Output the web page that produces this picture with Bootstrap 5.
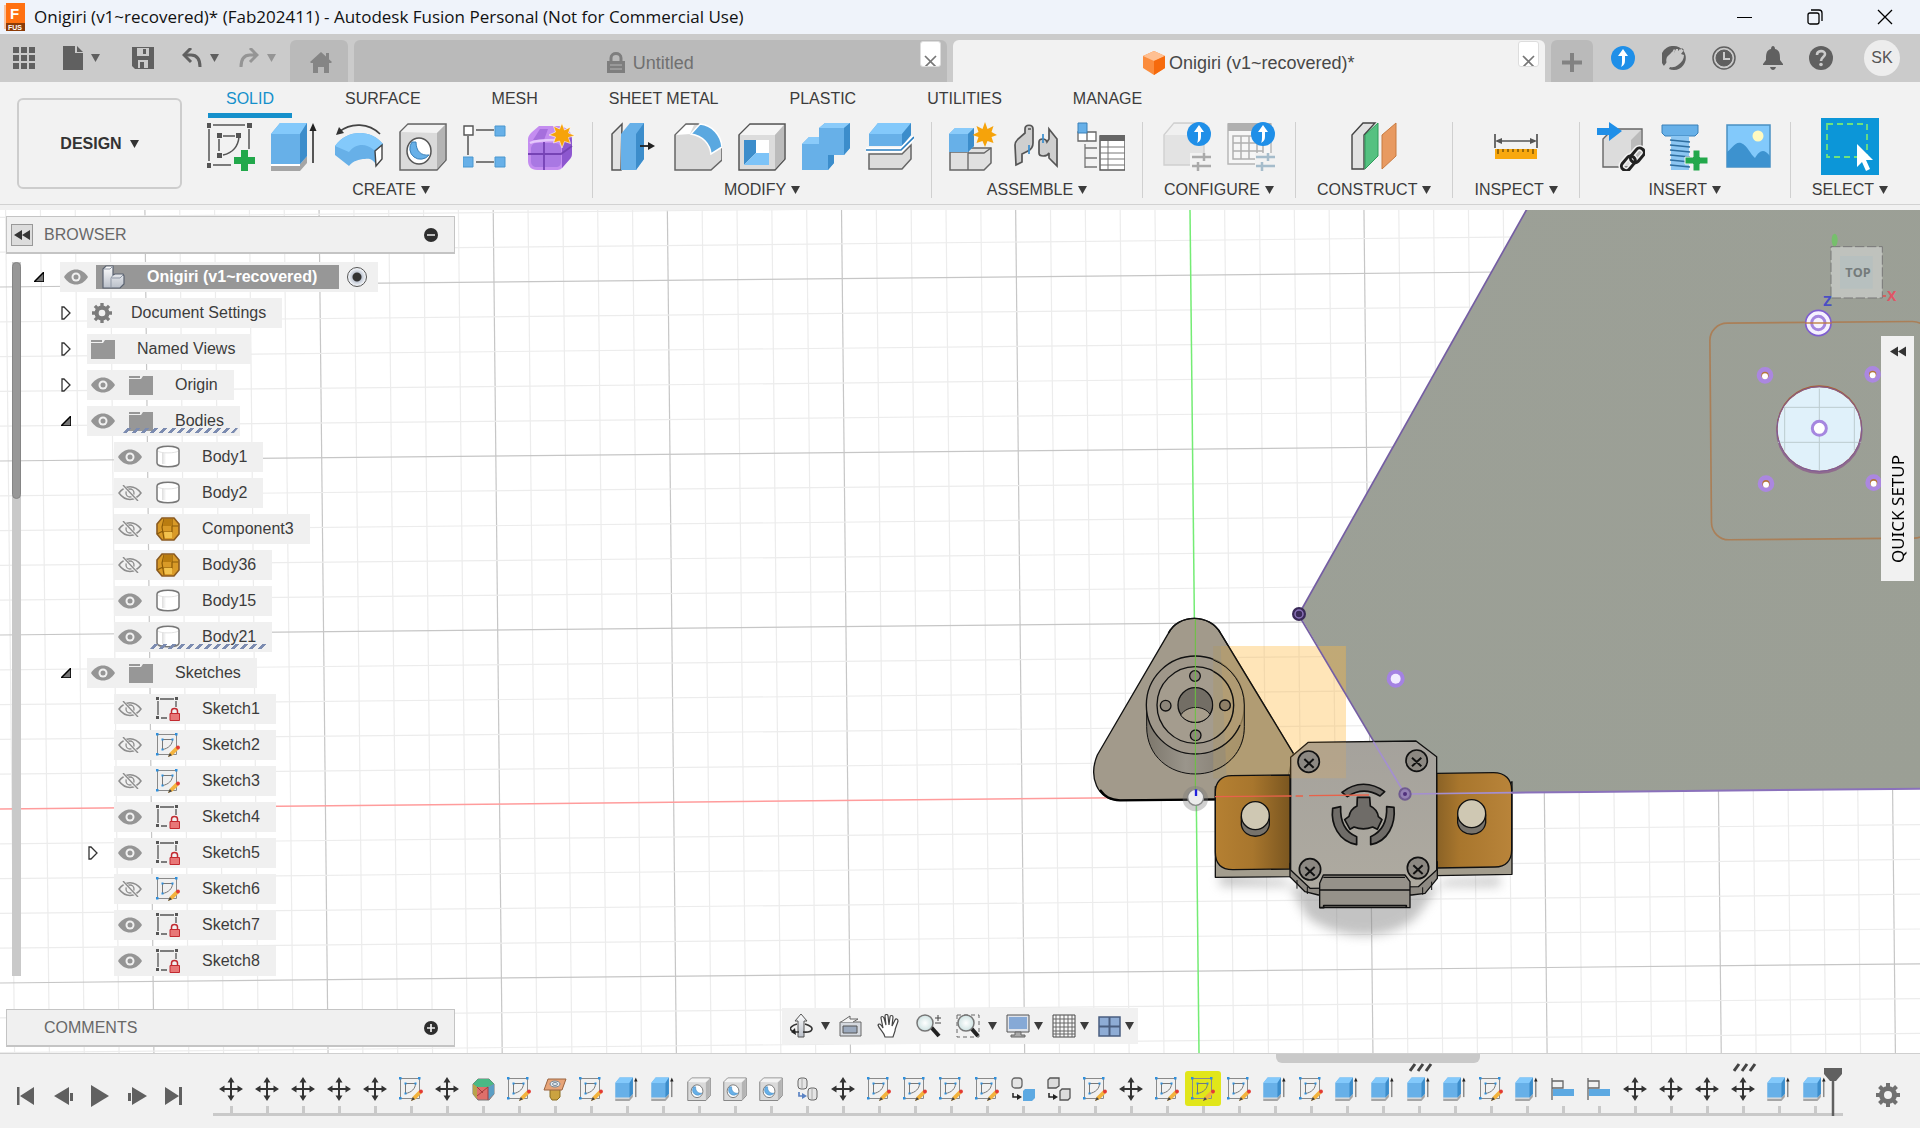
<!DOCTYPE html>
<html lang="en">
<head>
<meta charset="utf-8">
<meta name="viewport" content="width=device-width, initial-scale=1">
<title>Onigiri (v1~recovered)* - Autodesk Fusion Personal</title>
<link rel="stylesheet" href="https://cdn.jsdelivr.net/npm/bootstrap@5.3.0/dist/css/bootstrap.min.css">
<style>
  body { font-family: "Liberation Sans", Arial, sans-serif; font-size: 16px; line-height: 20px; color: #3c3c3c; background: #f1f1f1; }
  svg { display: block; flex: none; }
  button { border: 0; background: none; padding: 0; color: inherit; }
  .titlebar { height: 34px; background: #eff3fa; color: #111; font-family: "Open Sans", "Noto Sans", sans-serif; font-size: 17px; padding-left: 4px; }
  .win-btn { width: 70px; height: 34px; display: flex; align-items: center; justify-content: center; }
  .quickbar { height: 48px; background: #cbcbcb; color: #606060; gap: 6px; }
  .quick-tools { width: 284px; padding-left: 13px; }
  .doc-tab { height: 42px; background: #bababa; border-radius: 6px 6px 0 0; font-size: 18px; color: #707070; padding-top: 3px; }
  .doc-tab.home { width: 58px; }
  .doc-tab.plus { width: 42px; }
  .doc-tab.wide { flex: 1 1 0; }
  .doc-tab.current { background: #f2f2f2; color: #484848; }
  .tab-x { right: 6px; top: 1px; width: 21px; height: 26px; background: #fff; border: 1px solid #ddd; border-radius: 3px; }
  .session { width: 321px; padding: 0 20px 0 12px; }
  .avatar { width: 36px; height: 36px; border-radius: 50%; background: #ededed; color: #555; }
  .ribbon { height: 123px; background: #f2f2f2; border-bottom: 1px solid #d2d2d2; padding-left: 17px; }
  .workspace { width: 165px; height: 91px; margin-top: 16px; border: 2px solid #cdcdcd; border-radius: 6px; font-weight: 700; color: #333; }
  .ribbon-tabs { gap: 35px; padding-left: 18px; height: 36px; }
  .ribbon-tabs a { padding: 7px 18px 0; height: 36px; color: #3c3c3c; text-decoration: none; border-bottom: 5px solid transparent; white-space: nowrap; }
  .ribbon-tabs a.active { color: #1590cb; border-color: #1590cb; }
  .tool-group { height: 76px; margin-top: 4px; border-right: 1px solid #d0d0d0; display: flex; flex-direction: column; align-items: center; }
  .tool-group:last-child { border: 0; }
  .tool-row { display: flex; gap: 16px; padding: 0 17px; height: 49px; }
  .tool-menu { padding: 0 21px; margin-top: 9px; white-space: nowrap; display: flex; align-items: center; gap: 5px; }
  .picked { background: #0c96d8; width: 58px; height: 57px; margin-top: -4px; display: flex; align-items: center; justify-content: center; }
  .viewport { margin-top: 5px; background: #fff; min-height: 800px; }
  .side { width: 449px; margin-left: 6px; padding: 6px 0 6px; }
  .side-head { height: 38px; background: #f0f0f0; border: 1px solid #c4c4c4; border-bottom-width: 2px; padding: 0 14px 0 4px; color: #686868; flex: none; }
  .side-head span { flex: 1; padding-left: 11px; }
  .side-head.closed span { padding-left: 33px; }
  .fold { width: 22px; height: 22px; background: #dcdcdc; border: 1px solid #999; display: flex; align-items: center; justify-content: center; }
  .track { width: 9px; margin-left: 6px; background: #c9c9c9; flex: none; }
  .thumb { height: 237px; background: #979797; border: 1px solid #858585; border-radius: 5px; }
  .tree { gap: 6px; margin-left: 13px; }
  .node { height: 30px; display: flex; align-items: center; gap: 16px; }
  .lv1 { padding-left: 27px; } .lv2 { padding-left: 54px; }
  .chip { height: 30px; background: #f0f0f0; padding: 0 16px 0 4px; display: flex; align-items: center; gap: 14px; position: relative; }
  .chip label { padding-left: 8px; }
  .chip.plain { padding-left: 5px; gap: 19px; color: #3c3c3c; }
  .chip.plain label { padding: 0; }
  .chip.plain svg { color: #7c7c7c; }
  .chip.root { padding: 0 11px 0 4px; gap: 8px; }
  .root-name { height: 24px; background: #979797; color: #fff; font-weight: 700; }
  .chip label.root-name { padding: 0 22px 0 5px; display: flex; align-items: center; gap: 22px; }
  .chip.hatched::after { content: ""; position: absolute; left: 38px; right: 4px; bottom: 3px; height: 5px; transform: skewX(-40deg); background: repeating-linear-gradient(90deg, #7b8bb0 0 4px, transparent 4px 9px); }
  .radio-dot { appearance: none; width: 20px; height: 20px; margin: 0; border: 1px solid #555; border-radius: 50%; background: radial-gradient(circle, #333 0 4px, #c3cad6 5px, #f6f8fb 9px); }
  .navtools { bottom: 9px; left: 50%; transform: translateX(-50%); height: 36px; width: 356px; background: #f1f1f1; padding: 0 4px 0 8px; gap: 9px; }
  .navtools .apart { margin-left: 6px; }
  .quick-setup { right: 6px; top: 126px; width: 33px; height: 245px; background: #f1f1f1; color: #000; font-family: "Noto Sans", "Open Sans", sans-serif; font-size: 17px; padding: 10px 0 18px; }
  .quick-setup span { writing-mode: vertical-rl; transform: rotate(180deg); }
  .timeline { height: 75px; border-top: 1px solid #cfcfcf; background: #f1f1f1; }
  .playback { width: 213px; padding: 10px 17px 0; flex: none; color: #606060; gap: 13px; }
  .steps { height: 74px; }
  .steps::after { content: ""; position: absolute; left: 0; right: 77px; top: 59px; height: 3px; background: #c9c9c9; }
  .hbar { left: 1063px; top: 0; width: 204px; height: 9px; border-radius: 0 0 6px 6px; background: #c9c9c9; }
  .step { width: 36px; height: 60px; padding-top: 17px; position: relative; display: flex; flex-direction: column; align-items: center; flex: none; }
  .step .frame { height: 35px; width: 36px; border-radius: 3px; display: flex; align-items: center; justify-content: center; }
  .step.lit .frame { background: #e1e61a; }
  .step::after { content: ""; width: 3px; height: 8px; background: #c9c9c9; }
  .flag { position: absolute; top: 9px; left: 8px; }
  .marker { margin: 14px 0 0 -9px; z-index: 1; }
  .settings { color: #707070; }
</style>
<script src="https://cdn.jsdelivr.net/npm/bootstrap@5.3.0/dist/js/bootstrap.bundle.min.js"></script>
</head>
<body class="vh-100 d-flex flex-column overflow-hidden">

<svg width="0" height="0" class="position-absolute" aria-hidden="true">
  <defs>
    <linearGradient id="gMetal" x1="0" y1="0" x2="0" y2="1"><stop offset="0" stop-color="#fff"/><stop offset="1" stop-color="#b9bfc9"/></linearGradient>
    <linearGradient id="gBody"><stop offset="0" stop-color="#ddd"/><stop offset=".35" stop-color="#fff"/><stop offset="1" stop-color="#fff"/></linearGradient>
    <radialGradient id="gLens"><stop offset="0" stop-color="#fff"/><stop offset="1" stop-color="#cfe3e3"/></radialGradient>
  </defs>
  <symbol id="tri" viewBox="0 0 9 8"><path d="M0 0h9L4.500 8z" fill="currentColor"/></symbol>
  <symbol id="newsketch" viewBox="0 0 48 49"><path d="M6 3h32M2 7v32M42 7v20M6 43h18M16 14h12M12 17v12M32 15C31 25 25 31 16 33" fill="none" stroke="#555" stroke-width="1.500"/><path d="M0 1h4v5H0zM40 1h5v5h-5zM0 41h4v5H0zM10 11h5v5h-5zM29 11h5v5h-5zM10 31h5v5h-5z" fill="#555"/><path d="M34 28h7v7h7v7h-7v7h-7v-7h-7v-7h7z" fill="#22a84b"/></symbol>
  <symbol id="extrude" viewBox="0 0 48 49"><path d="M0 42h29l7-8v7l-7 8H0z" fill="#a5a5a5"/><path d="M0 42h29v2H0z" fill="#fff"/><path d="M0 12L9 1h27v33l-7 8H0z" fill="#67b0e8"/><path d="M0 12L9 1h27l-7 11z" fill="#83c9fb"/><path d="M29 12l7-11v33l-7 8z" fill="#3c8dcb"/><path d="M42 41V7" stroke="#222" stroke-width="1.500"/><path d="M42 1l3.500 8h-7z" fill="#222"/></symbol>
  <symbol id="revolve" viewBox="0 0 48 49"><path d="M4 10C16 0 34 1 45 12" fill="none" stroke="#444" stroke-width="1.700"/><path d="M1 13l3-8 5 6z" fill="#333"/><path d="M0 24C12 7 36 7 48 22L42 44C38 37 34 36 30 37 24 37 18 39 14 44L0 33z" fill="#67b0e8"/><path d="M0 24C12 7 36 7 48 22L39 28C30 20 20 22 14 30z" fill="#83c9fb"/><path d="M40 29l7-6v14l-6 7z" fill="#fff" stroke="#444" stroke-width="1.400"/></symbol>
  <symbol id="hole" viewBox="0 0 48 49"><path d="M1 10L9 2h38v36l-9 10H1z" fill="#dadada" stroke="#666" stroke-width="1.500"/><path d="M2 10L9 3h37l-8 8z" fill="#f3f3f3"/><path d="M38 11l8-8v35l-8 9z" fill="#b4b4b4"/><ellipse cx="20" cy="29" rx="12" ry="13" fill="#fff" stroke="#555" stroke-width="1.500"/><path d="M13 20a10 10 0 1 0 17 13C22 34 17 29 17 20z" fill="#67b0e8" stroke="#3a80b8"/></symbol>
  <symbol id="patternrect" viewBox="0 0 48 49"><path d="M13 8h18M5 14v19M13 40h18" stroke="#555" stroke-width="1.500"/><path d="M1 4h9v9H1z" fill="#fff" stroke="#555" stroke-width="1.400"/><path d="M32 4h10v10H32zM0 35h10v10H0zM32 35h10v10H32z" fill="#67b0e8" stroke="#4a97cf"/></symbol>
  <symbol id="formbox" viewBox="0 0 48 49"><path d="M1 17C1 14 3 12 5 10L12 4h20c8 1 13 6 13 13v14c0 3-1 5-3 7l-7 8c-2 2-4 2-6 2H10c-6 0-9-4-9-9z" fill="#c48df0"/><path d="M35 20l9-6c1 2 1 4 1 7v10c0 3-1 5-3 7l-7 8z" fill="#8d57cf"/><path d="M4 26c1-4 3-5 6-5h16c5 0 8 2 8 6v13c0 3-2 5-5 5H10c-4 0-6-2-6-6z" fill="#a978e3"/><path d="M1 32h33l11-8M17 20v28" stroke="#7643b5" stroke-width="1.800" fill="none"/><path d="M6 18L13 7h8l-4 11z" fill="#a66fdd"/><path d="M3 21C9 18 18 18 29 18" stroke="#e5c9fb" stroke-width="2.500" fill="none"/><path d="M35 1l2.500 7 6-3-2 6 6.500 2.500-6.500 2 2 6-6-2L35 26l-2.500-7-6 2 2-6-6.500-2 6.500-3-2-6 6 3z" fill="#f6a30a" stroke="#fff" stroke-width=".6"/></symbol>
  <symbol id="presspull" viewBox="0 0 48 49"><path d="M12 2L2 12v36h9z" fill="#e3e3e3" stroke="#555" stroke-width="1.500"/><path d="M11 12L20 1h14v36l-8 11H11z" fill="#67b0e8"/><path d="M26 12l8-11v36l-8 11z" fill="#3c8dcb"/><path d="M30 24h10" stroke="#222" stroke-width="1.800"/><path d="M38 20l7 4-7 4z" fill="#222"/></symbol>
  <symbol id="fillet" viewBox="0 0 48 49"><path d="M1 13L12 2h12C38 6 46 16 48 25v13L37 48H1z" fill="#dadada" stroke="#666" stroke-width="1.500"/><path d="M2 13L12 3h8l-4 9z" fill="#fff"/><path d="M17 12L26 2C38 3 47 13 48 25L37 32C36 22 29 14 17 12z" fill="#5aa8e0" stroke="#fff" stroke-width="1.500"/></symbol>
  <symbol id="shell" viewBox="0 0 48 49"><path d="M1 13L12 2h35v35L37 48H1z" fill="#dcdcdc" stroke="#555" stroke-width="1.500"/><path d="M2 13L12 3h34L37 13z" fill="#f5f5f5"/><path d="M37 13L46 3v34l-9 10z" fill="#bcbcbc"/><path d="M6 18h25v25H6z" fill="#fff"/><path d="M6 18h12v13L6 43z" fill="#3c8dcb"/><path d="M18 31h13v12H6z" fill="#7dc3f7"/></symbol>
  <symbol id="combine" viewBox="0 0 48 49"><path d="M0 22l7-7h10V6l6-5h25v25l-6 7H32v8l-6 7H0z" fill="#67b0e8"/><path d="M0 22l7-7h10v7zM17 6l6-5h25l-6 5z" fill="#8acbfa"/><path d="M42 6l6-5v25l-6 7zM26 33h6v8l-6 7z" fill="#3c8dcb"/></symbol>
  <symbol id="split" viewBox="0 0 48 49"><path d="M3 12L12 1h33v12L36 24H3z" fill="#67b0e8"/><path d="M3 12L12 1h33l-9 11z" fill="#83c9fb"/><path d="M36 12l9-11v12l-9 11z" fill="#3c8dcb"/><path d="M3 32h33l9-9v14l-9 10H3z" fill="#dcdcdc" stroke="#666" stroke-width="1.500"/><path d="M0 28h35l13-13" stroke="#fff" stroke-width="5" fill="none"/><path d="M0 28h35l13-13" stroke="#2b7fc0" stroke-width="1.600" fill="none"/></symbol>
  <symbol id="newcomp" viewBox="0 0 48 49"><path d="M1 30h18V26h23v15l-7 7H1z" fill="#e0e0e0" stroke="#666" stroke-width="1.500"/><path d="M19 31v17M19 31h16l7-5" stroke="#666" stroke-width="1.300" fill="none"/><path d="M0 12l6-6h19v18l-6 6H0z" fill="#67b0e8"/><path d="M0 12l6-6h19l-6 6z" fill="#8acbfa"/><path d="M19 12l6-6v18l-6 6z" fill="#3c8dcb"/><path d="M36 0l2.500 7 6-3-2 6 5.500 3-5.500 2 2 6-6-2-2.500 6-2.500-6-6 2 2-6-6-2 6-3-2-6 6 3z" fill="#f6a30a"/></symbol>
  <symbol id="joint" viewBox="0 0 48 49"><path d="M2 23c0-3 1-4 3-6l7-6V7c0-5 8-5 8 0v14c0 5-3 7-5 8l-6 3v8l-6 3z" fill="#cfcfcf" stroke="#555" stroke-width="1.700"/><path d="M15 7h3" stroke="#555" stroke-width="1.500"/><path d="M36 7l8 10v27l-8-8V31c-2 4-10 4-10 0V20c0-4 7-4 8 0l2-3z" fill="#cfcfcf" stroke="#555" stroke-width="1.700"/><path d="M16 23v9M30 12v9" stroke="#3a8fd0" stroke-width="1.700"/></symbol>
  <symbol id="bom" viewBox="0 0 48 49"><path d="M1 10h18v9H1zM10 10v9" fill="#fff" stroke="#666" stroke-width="1.300"/><path d="M1 1h9v10H1z" fill="#67b0e8" stroke="#3a80b8"/><path d="M8 22v24M8 26h12M8 36h12M8 45h12" stroke="#777" stroke-width="1.300" fill="none"/><path d="M23 14h25v34H23z" fill="#fff" stroke="#555" stroke-width="1.400"/><path d="M23 13h25v6H23z" fill="#666"/><path d="M31 19v29M23 25h25M23 31h25M23 37h25M23 43h25" stroke="#777"/></symbol>
  <symbol id="upbadge" viewBox="0 0 24 24"><circle cx="12" cy="12" r="12" fill="#1f8fe8"/><path d="M12 3l5 7h-3v4c0 4-1 5-4 7 1-2 1-4 1-7v-4H7z" fill="#fff"/></symbol>
  <symbol id="cfg1" viewBox="0 0 48 49"><path d="M1 13L11 1h30v34l-8 8H1z" fill="#e3e3e3" stroke="#d0d0d0" stroke-width="1.400"/><path d="M2 13l9-11h29l-8 11z" fill="#f0f0f0"/><path d="M27 31h21v18H27z" fill="#f2f2f2"/><path d="M29 35h19M29 44h19M41 31v8M35 40v9" stroke="#aaa" stroke-width="2.500"/><use href="#upbadge" x="24" y="0" width="24" height="24"/></symbol>
  <symbol id="cfg2" viewBox="0 0 48 49"><path d="M1 2h43v40H1z" fill="#f6f6f6" stroke="#b5b5b5" stroke-width="1.400"/><path d="M1 1h43v8H1z" fill="#b0b0b0"/><path d="M6 14h30v23H6zM6 21h30M6 29h30M14 14v23M22 14v23M30 14v23" fill="none" stroke="#b0b0b0" stroke-width="1.500"/><path d="M28 31h20v18H28z" fill="#f2f2f2"/><path d="M29 35h19M29 44h19M41 31v8M35 40v9" stroke="#a5bccb" stroke-width="2.500"/><use href="#upbadge" x="24" y="0" width="24" height="24"/></symbol>
  <symbol id="plane" viewBox="0 0 48 49"><path d="M2 13L13 1h12L14 13v34H2z" fill="#e2e2e2" stroke="#444" stroke-width="1.400"/><path d="M15 13L28 1v33L15 47z" fill="#55c181" stroke="#2c9c59"/><path d="M32 13L46 1v33L32 47z" fill="#e89a61" stroke="#c87a40"/></symbol>
  <symbol id="measure" viewBox="0 0 48 49"><path d="M3 12v14M45 12v14M5 19h38" stroke="#555" stroke-width="1.700"/><path d="M3 19l7-3v6zM45 19l-7-3v6z" fill="#555"/><path d="M3 27h42v10H3z" fill="#f9a80f"/><path d="M6 27v5M11 27v3M16 27v3M21 27v3M26 27v3M31 27v3M36 27v3M41 27v5" stroke="#6b4a05" stroke-width="1.300"/></symbol>
  <symbol id="derive" viewBox="0 0 48 49"><path d="M6 17L16 7h29v28L34 45H6z" fill="#dcdcdc" stroke="#666" stroke-width="1.400"/><path d="M34 18L44 8v27L34 44z" fill="#bbb"/><path d="M0 6h12V0l13 9-13 10v-6H0z" fill="#1f8fe8"/><g fill="none" stroke="#f2f2f2" stroke-width="6"><rect x="32" y="29" width="16" height="9" rx="4" transform="rotate(-50 40 33)"/><rect x="23" y="37" width="16" height="9" rx="4" transform="rotate(-50 31 41)"/></g><g fill="none" stroke="#222" stroke-width="3"><rect x="32" y="29" width="16" height="9" rx="4" transform="rotate(-50 40 33)"/><rect x="23" y="37" width="16" height="9" rx="4" transform="rotate(-50 31 41)"/></g></symbol>
  <symbol id="bolt" viewBox="0 0 48 49"><path d="M1 3h36v8l-3 3H4l-3-3z" fill="#67b0e8" stroke="#3a80b8"/><path d="M10 14h18v34H10z" fill="#8cc6f2"/><path d="M9 18l20 2M9 23l20 2M9 28l20 2M9 33l20 2M9 38l20 2M9 43l20 2" stroke="#2f6e9f" stroke-width="1.600"/><path d="M32 28h7v7h8v7h-8v7h-7v-7h-8v-7h8z" fill="#22a84b" stroke="#f2f2f2"/></symbol>
  <symbol id="picture" viewBox="0 0 48 49"><path d="M2 3h43v42H2z" fill="#82c9fb" stroke="#4a90c2" stroke-width="1.500"/><circle cx="33" cy="14" r="5.500" fill="#fffac0"/><path d="M2 30c4-2 8-11 14-9 7 3 9 11 14 15 4-6 8-11 15-2v11H2z" fill="#3d92cf"/></symbol>
  <symbol id="selecttool" viewBox="0 0 48 49"><path d="M1 2h40v33H1z" fill="none" stroke="#6fe27d" stroke-width="1.800" stroke-dasharray="6 4"/><path d="M31 22v23l5-5 4 9 4-2-4-9h7z" fill="#fff"/></symbol>
  <symbol id="move" viewBox="0 0 24 24"><path d="M12 4v16M4 12h16" stroke="#333" stroke-width="2"/><path d="M12 0l3.500 5.500h-7zM12 24l3.500-5.500h-7zM0 12l5.500-3.500v7zM24 12l-5.500-3.500v7z" fill="#333"/></symbol>
  <symbol id="sketch" viewBox="0 0 24 24"><path d="M1.500 1.500h19v20h-19z" fill="none" stroke="#8a8a8a"/><path d="M6.500 16.500V6.500h10c0 5-4 9-10 10z" fill="none" stroke="#777"/><path d="M0 0h2.500v2.500H0zM19 0h2.500v2.500H19zM0 20h2.500v2.500H0zM5.500 5.500h2v2h-2zM15.500 5.500h2v2h-2zM5.500 15.500h2v2h-2z" fill="#2f8fdc"/><path d="M12 24l2-4.500 6-6 2.700 2.700-6 6z" fill="#f3b33e"/><path d="M12 24l1.800-4 2.200 2.300z" fill="#444"/><circle cx="22" cy="14.500" r="1.900" fill="#e33b34"/></symbol>
  <symbol id="sketchlock" viewBox="0 0 24 24"><path d="M4 2h14M2 4v14M20 4v6M5 21h6" stroke="#555" stroke-width="1.300"/><path d="M0 0h3v3H0zM19 0h3v3h-3zM0 19h3v3H0z" fill="#555"/><path d="M15.500 17v-3c0-3.500 6-3.500 6 0v3" fill="none" stroke="#c22a30" stroke-width="1.500"/><path d="M14 16.500h9.500v7H14z" fill="#e87777" stroke="#c22a30"/></symbol>
  <symbol id="eye" viewBox="0 0 24 16"><path d="M0 8C6-2 18-2 24 8 18 18 6 18 0 8z" fill="#959595"/><circle cx="12" cy="8" r="4.500" fill="#f0f0f0"/><circle cx="12" cy="8" r="2.500" fill="#959595"/></symbol>
  <symbol id="eyeoff" viewBox="0 0 24 16"><path d="M1 8C7-.5 17-.5 23 8 17 16.500 7 16.500 1 8z" fill="none" stroke="#8d8d8d" stroke-width="1.500"/><circle cx="12" cy="8" r="4" fill="none" stroke="#8d8d8d" stroke-width="1.300"/><path d="M4 0l16 16" stroke="#f0f0f0" stroke-width="3"/><path d="M5 0l15 16" stroke="#8d8d8d" stroke-width="1.400"/></symbol>
  <symbol id="folder" viewBox="0 0 24 24"><path d="M0 3h11v2H0zM0 6h12l2-3h10v19H0z" fill="#979797"/></symbol>
  <symbol id="gear" viewBox="0 0 24 24"><circle cx="12" cy="12" r="6.500" fill="none" stroke="currentColor" stroke-width="5"/><g stroke="currentColor" stroke-width="4"><path d="M12 0v5M12 19v5M0 12h5M19 12h5M3.500 3.500L7 7M17 17l3.500 3.500M20.500 3.500L17 7M7 17l-3.500 3.500"/></g></symbol>
  <symbol id="body" viewBox="0 0 24 24"><path d="M1 5c0-5 22-5 22 0v13c0 5-22 5-22 0z" fill="#fff" stroke="#777" stroke-width="1.500"/><path d="M6 8h12v11H6z" fill="url(#gBody)"/><path d="M2 6c2 2.500 18 2.500 20 0" stroke="#e2e2e2" fill="none"/></symbol>
  <symbol id="meshy" viewBox="0 0 24 24"><path d="M6 1h12l5 6v10l-5 6H6l-5-6V7z" fill="#d99a27" stroke="#8a5a20" stroke-width="1.600"/><path d="M8 2l-2 8 2 12M16 2v13H6M16 9h6M1 17l6-3" stroke="#8a5a08" stroke-width="1.200" fill="none"/><path d="M8 2h8v7H7z" fill="#b97c10"/><path d="M8 15h8v6H9z" fill="#f2c24e"/></symbol>
  <symbol id="component" viewBox="0 0 24 24"><path d="M2 4l3-3h7v9l2-1h8l1 2v8l-4 4H2z" fill="url(#gMetal)" stroke="#5a6270" stroke-width="1.200"/><path d="M12 10l-2 3v9M11 13h8l3-3M3 4h6l3-3" stroke="#8f97a5" fill="none"/></symbol>
  <symbol id="open" viewBox="0 0 10 10"><path d="M10 0v10H0z" fill="#777" stroke="#000" stroke-width="1.500"/></symbol>
  <symbol id="closed" viewBox="0 0 10 14"><path d="M1 1l2 0 6 6-6 6-2 0z" fill="#fff" stroke="#333" stroke-width="1.300"/></symbol>
  <symbol id="rewind" viewBox="0 0 16 10"><path d="M8 0v10L0 5zM16 0v10L8 5z" fill="#333"/></symbol>
  <symbol id="form" viewBox="0 0 24 24"><path d="M2 7l5-5h11l5 5v10l-5 6H7l-5-6z" fill="#df6f6a" stroke="#777"/><path d="M2 7l5-5h11l5 5-6 3H6z" fill="#49b985"/><path d="M17 10l6-3v10l-6 6z" fill="#5b9ec4"/><path d="M2 7l4 3v12l-4-5z" fill="#b9a24a"/><path d="M6 19l11-9v13M6 10l6 6" stroke="#a33c3c" fill="none"/></symbol>
  <symbol id="emboss" viewBox="0 0 24 24"><path d="M7 12h10v8l-3 3H9l-2-3z" fill="#cba340" stroke="#8a6c20"/><path d="M5 2h18l-4 11H1z" fill="#e7a478" stroke="#9a6440"/><ellipse cx="12" cy="7" rx="5" ry="3" fill="#e9eef2" stroke="#789"/><ellipse cx="12" cy="7" rx="2.500" ry="1.500" fill="none" stroke="#789"/></symbol>
  <symbol id="copybody" viewBox="0 0 24 24"><rect x="3" y="1" width="9" height="11" rx="3" fill="#e5e5e5" stroke="#666"/><rect x="13" y="11" width="9" height="12" rx="3" fill="#e5e5e5" stroke="#666"/><path d="M17 12v10M7 2v9" stroke="#aaa"/><path d="M4 15v4h4" fill="none" stroke="#5b83c4" stroke-width="1.700"/><path d="M7 16l5 3-5 3z" fill="#5b83c4"/></symbol>
  <symbol id="toblue" viewBox="0 0 24 24"><rect x="1" y="1" width="10" height="10" rx="3" fill="#e5e5e5" stroke="#666" stroke-width="1.300"/><path d="M12 14l2-2h10v9l-3 3h-9z" fill="#5da9e2"/><path d="M2 16v4h4" fill="none" stroke="#222" stroke-width="1.500"/><path d="M6 17l5 3-5 3z" fill="#222"/></symbol>
  <symbol id="togray" viewBox="0 0 24 24"><path d="M1 3l2-2h9v8l-3 2H1zM13 14l2-2h8v9l-2 2h-8z" fill="#dcdcdc" stroke="#555" stroke-width="1.300"/><path d="M2 16v4h4" fill="none" stroke="#222" stroke-width="1.500"/><path d="M6 17l5 3-5 3z" fill="#222"/></symbol>
  <symbol id="align" viewBox="0 0 24 24"><path d="M1 1v22M1 4h11v7H1" fill="none" stroke="#666" stroke-width="1.300"/><path d="M2 12h21v7H2z" fill="#5da9e2"/></symbol>
</svg>

<header class="titlebar d-flex align-items-center">
  <svg width="22" height="28" viewBox="0 0 22 28"><path d="M0 2h2v24H0z" fill="#f9c3a0"/><path d="M2 0h19v20H2z" fill="#ff7011"/><path d="M2 20h19v8H2z" fill="#8d3b06"/><text x="6" y="16" font-family="Liberation Sans" font-size="15" font-weight="700" fill="#fff">F</text><text x="4" y="27" font-family="Liberation Sans" font-size="7" font-weight="700" fill="#fff">FUS</text></svg>
  <span class="flex-fill ps-2 text-nowrap">Onigiri (v1~recovered)* (Fab202411) - Autodesk Fusion Personal (Not for Commercial Use)</span>
  <button class="win-btn" aria-label="Minimize"><svg width="16" height="16"><path d="M0 8.500h15" stroke="#000"/></svg></button>
  <button class="win-btn" aria-label="Restore"><svg width="16" height="16" fill="none" stroke="#000" stroke-width="1.300"><rect x="1" y="4" width="11" height="11" rx="2"/><path d="M4 1h8c2 0 3 1 3 3v8"/></svg></button>
  <button class="win-btn" aria-label="Close"><svg width="16" height="16" stroke="#000" stroke-width="1.300"><path d="M1 1l14 14M15 1L1 15"/></svg></button>
</header>

<div class="quickbar d-flex align-items-end">
  <div class="quick-tools d-flex align-items-center align-self-stretch flex-shrink-0">
    <button aria-label="Data panel"><svg width="22" height="22" fill="currentColor"><path d="M0 0h6v6H0zM8 0h6v6H8zM16 0h6v6h-6zM0 8h6v6H0zM8 8h6v6H8zM16 8h6v6h-6zM0 16h6v6H0zM8 16h6v6H8zM16 16h6v6h-6z"/></svg></button>
    <button class="d-flex align-items-center gap-2 ms-4 ps-1" aria-label="File"><svg width="20" height="24" fill="currentColor"><path d="M0 0h12v7h8v17H0zM14 0l6 6h-6z"/></svg><svg width="9" height="8"><use href="#tri"/></svg></button>
    <button class="ms-4 ps-2" aria-label="Save"><svg width="22" height="22"><path d="M0 0h22v22H3l-3-3z" fill="currentColor"/><path d="M5 1h12v8H5zM6 13h10v8H6z" fill="#cbcbcb"/><path d="M11 2h3v5h-3zM8 15h4v6H8z" fill="currentColor"/></svg></button>
    <button class="d-flex align-items-center gap-2 ms-4 ps-1" aria-label="Undo"><svg width="20" height="20"><path d="M3 7h6c6 0 9 4 9 12" fill="none" stroke="currentColor" stroke-width="3"/><path d="M9 0L2 7l7 7" fill="none" stroke="currentColor" stroke-width="3"/></svg><svg width="9" height="8"><use href="#tri"/></svg></button>
    <button class="d-flex align-items-center gap-2 ms-3 ps-1 opacity-50" aria-label="Redo"><svg width="20" height="20"><path d="M17 7h-6c-6 0-9 4-9 12M11 0l7 7-7 7" fill="none" stroke="currentColor" stroke-width="3"/></svg><svg width="9" height="8"><use href="#tri"/></svg></button>
  </div>
  <button class="doc-tab home ps-1 d-flex align-items-center justify-content-center flex-shrink-0" aria-label="Home"><svg width="26" height="21" fill="#858585"><path d="M13 0l11 10-1 1H3l-1-1zM5 11h16v10h-5v-6h-6v6H5zM18 1h3v6h-3z"/></svg></button>
  <div class="doc-tab wide position-relative d-flex align-items-center justify-content-center gap-2"><svg width="18" height="21"><path d="M4 9V6c0-6 10-6 10 0v3" fill="none" stroke="#7e7e7e" stroke-width="3"/><path d="M0 9h18v12H0z" fill="#7e7e7e"/><path d="M3 13h12M3 17h12" stroke="#b5b5b5"/></svg>Untitled
    <button class="tab-x position-absolute" aria-label="Close Untitled"><svg width="19" height="24" stroke="#777" stroke-width="1.700"><path d="M4 14l11 11M15 14L4 25"/></svg></button></div>
  <div class="doc-tab wide current position-relative d-flex align-items-center justify-content-center"><svg width="22" height="24" class="me-1"><path d="M11 0l11 5v12l-11 7L0 17V5z" fill="#fb8c3c"/><path d="M11 0l11 5-11 5L0 5z" fill="#ffc092"/><path d="M11 10l11-5v12l-11 7z" fill="#f66a0c"/></svg>Onigiri (v1~recovered)*
    <button class="tab-x position-absolute" aria-label="Close Onigiri"><svg width="19" height="24" stroke="#777" stroke-width="1.700"><path d="M4 14l11 11M15 14L4 25"/></svg></button></div>
  <button class="doc-tab plus flex-shrink-0 d-flex align-items-center justify-content-center" aria-label="New tab"><svg width="26" height="19"><path d="M13 0v19M3 9.500h20" stroke="#828282" stroke-width="4"/></svg></button>
  <div class="session d-flex align-items-center justify-content-between align-self-stretch flex-shrink-0">
    <button aria-label="Updates"><svg width="24" height="24"><use href="#upbadge"/></svg></button>
    <button aria-label="Extensions"><svg width="24" height="24"><path d="M12 0a12 12 0 1 1-5 23l1-2a9.500 9.500 0 0 0 8-2c4-3 6-6 6-10l-3-1 3-4-2-2-4 4V3h-2l-2 4-2-1-5 5c-1 3-1 6 1 8l-3 2A12 12 0 0 1 12 0z" fill="#606060"/><path d="M9 8l3-5 1 1-1 5 6-6 1 2-5 6 6-2 1 2-6 4c-1 4-5 5-8 4l-4 4-2-2 4-5c-1-4 1-6 4-8z" fill="#cbcbcb"/></svg></button>
    <button aria-label="Job status"><svg width="24" height="24" fill="none" stroke="#606060"><circle cx="12" cy="12" r="11" stroke-width="1.500"/><circle cx="12" cy="12" r="8" fill="#606060"/><path d="M12 6v7h6" stroke="#cbcbcb" stroke-width="2"/></svg></button>
    <button aria-label="Notifications"><svg width="20" height="24" fill="#606060"><path d="M10 0c1 0 2 1 2 3 5 1 5 6 5 11l3 4v1H0v-1l3-4C3 9 3 4 8 3c0-2 1-3 2-3zM7 21h6c-1 4-5 4-6 0z"/></svg></button>
    <button aria-label="Help"><svg width="24" height="24"><circle cx="12" cy="12" r="12" fill="#606060"/><path d="M8 9c0-5 8-5 8-1 0 3-4 3-4 7" fill="none" stroke="#cbcbcb" stroke-width="2.600"/><circle cx="12" cy="18.500" r="1.800" fill="#cbcbcb"/></svg></button>
    <button class="avatar ms-1">SK</button>
  </div>
</div>

<div class="ribbon d-flex flex-shrink-0">
  <button class="workspace d-flex align-items-center justify-content-center gap-2 flex-shrink-0">DESIGN <svg width="9" height="8"><use href="#tri"/></svg></button>
  <div class="flex-fill ms-2">
    <nav class="ribbon-tabs d-flex">
      <a href="#" class="active">SOLID</a><a href="#">SURFACE</a><a href="#">MESH</a><a href="#">SHEET METAL</a><a href="#">PLASTIC</a><a href="#">UTILITIES</a><a href="#">MANAGE</a>
    </nav>
    <div class="d-flex" id="tools"></div>
  </div>
</div>

<main class="viewport position-relative flex-fill overflow-hidden d-flex">
  <svg class="position-absolute top-0 start-0 w-100 h-100" viewBox="0 210 1920 843" preserveAspectRatio="xMidYMid slice" role="img" aria-label="3D model">
    <defs>
      <filter id="soft" x="-30%" y="-30%" width="160%" height="160%"><feGaussianBlur stdDeviation="16"/></filter>
      <linearGradient id="plate" x1="0" y1="0" x2="1" y2="1"><stop offset="0" stop-color="#9ca097"/><stop offset="1" stop-color="#9b9f95"/></linearGradient>
      <linearGradient id="goldL"><stop offset="0" stop-color="#b58032"/><stop offset=".5" stop-color="#a8762d"/><stop offset="1" stop-color="#7a5620"/></linearGradient>
      <linearGradient id="goldR"><stop offset="0" stop-color="#8a6226"/><stop offset=".3" stop-color="#a8762d"/><stop offset="1" stop-color="#b9843a"/></linearGradient>
      <linearGradient id="steel" x1="0" y1="0" x2="0" y2="1"><stop offset="0" stop-color="#a5a29c"/><stop offset="1" stop-color="#aeaaa0"/></linearGradient>
      <linearGradient id="cyl"><stop offset="0" stop-color="#7d776c"/><stop offset=".4" stop-color="#9a958b"/><stop offset="1" stop-color="#7f776b"/></linearGradient>
    </defs>
    <g id="grid"></g>
    <path d="M0 809L1196 797" stroke="#ff9c9c" stroke-width="1.500"/>
    <path d="M1190 209L1199 1053" stroke="#74ec74" stroke-width="1.500"/>
    <path d="M1527 209L1299 614l106 180 515-5V209z" fill="url(#plate)"/>
    <g transform="translate(1060 590) scale(.33333)" stroke-linejoin="round">
      <path d="M480 850l200 20 60 110c100 75 250 75 330 0l80-110 170-10v28H480z" fill="#888" opacity=".5" filter="url(#soft)"/>
      <path d="M325 130C355 70 450 70 482 130L700 490l-30 137-490 4C110 630 85 560 112 495z" fill="#a29a8b" stroke="#111" stroke-width="4"/>
      <path d="M120 600c15 20 30 30 60 31l290-3" fill="none" stroke="#000" stroke-width="7"/>
      <path d="M260 345V410c0 90 70 142 146 142s147-52 147-142V345z" fill="url(#cyl)" stroke="#111" stroke-width="3"/>
      <circle cx="406" cy="345" r="147" fill="#9f978a" stroke="#111" stroke-width="4"/>
      <circle cx="406" cy="345" r="115" fill="#a49c8e" stroke="#111" stroke-width="4"/>
      <circle cx="406" cy="345" r="52" fill="#736e65" stroke="#111" stroke-width="4"/>
      <path d="M362 375c20-30 70-30 88-2-8 14-24 24-44 24s-36-10-44-22z" fill="#a79d8b" stroke="#111" stroke-width="3"/>
      <g fill="#8d867b" stroke="#111" stroke-width="4"><circle cx="405" cy="258" r="16"/><circle cx="317" cy="347" r="16"/><circle cx="495" cy="346" r="16"/><circle cx="407" cy="436" r="16"/></g>
      <path d="M406 85V610" stroke="#68c63e" stroke-width="3"/>
      <path d="M482 168H858V565H500z" fill="#ffb842" opacity=".3"/>
      <path d="M460 168H858V565H460z" fill="#ffb842" opacity=".1"/>
      <path d="M325 130C355 70 450 70 482 130L700 490-30 0" fill="none"/>
      <path d="M460 168L505 168L700 490L690 565H460z" fill="#a39577" opacity=".55"/>
      <path d="M325 130C355 70 450 70 482 130L700 490" fill="none" stroke="#111" stroke-width="4"/>
      <path d="M460 210a147 147 0 0 1 93 135v65c0 66-40 112-93 132" fill="none" stroke="#111" stroke-width="3"/>
      <path d="M540 405a147 147 0 0 1-80 77M460 244a115 115 0 0 1 0 203" fill="none" stroke="#111" stroke-width="4"/>
      <circle cx="495" cy="346" r="16" fill="#8f8068" stroke="#111" stroke-width="4"/>
      <circle cx="406" cy="626" r="38" fill="#777" opacity=".35"/><circle cx="407" cy="622" r="24" fill="#ececec" stroke="#888" stroke-width="4"/><path d="M408 598v20" stroke="#2222dd" stroke-width="7"/>
      <path d="M716 75L1035 612" stroke="#755ea3" stroke-width="5"/>
      <path d="M466 590v272l230-2V820zM1130 820v37l226-4V575z" fill="#a39d8e" stroke="#111" stroke-width="4"/>
      <path d="M690 555l-175 2c-32 0-49 20-49 50v180c0 35 20 52 52 52l172-2z" fill="url(#goldL)" stroke="#111" stroke-width="4"/>
      <path d="M1130 550l170-2c35 0 55 20 55 52v180c0 32-18 51-50 51l-175 3z" fill="url(#goldR)" stroke="#111" stroke-width="4"/>
      <g stroke="#111" stroke-width="4"><path d="M544 680v25c8 45 76 45 84 0v-25zM1193 674v25c8 45 76 45 84 0v-25z" fill="#77736c"/><circle cx="586" cy="677" r="42" fill="#cfc8b3"/><circle cx="1235" cy="671" r="42" fill="#cfc8b3"/></g>
      <path d="M690 820v40l45 45 40 10h280l40-5 37-45V815z" fill="#8e8a83" stroke="#111" stroke-width="4"/>
      <path d="M745 457l323-4 62 47v340l-55 50-325 5-58-55V502z" fill="url(#steel)" stroke="#111" stroke-width="4"/>
      <path d="M690 500l55-43 113-1v109H690z" fill="#ffb030" opacity=".16"/>
      <path d="M711 870v26M742 890v22M1088 892v22M1115 875v25" stroke="#111" stroke-width="3"/>
      <path d="M790 855h245l15 20v78H779V880z" fill="#96928a" stroke="#111" stroke-width="4"/><path d="M779 900h271M790 862h245" stroke="#111" stroke-width="4"/><path d="M779 953h12v-6h248v6" fill="none" stroke="#111" stroke-width="5"/>
      <g stroke="#111" fill="#8c8882" stroke-width="5"><circle cx="746" cy="515" r="32"/><circle cx="1070" cy="512" r="32"/><circle cx="750" cy="838" r="32"/><circle cx="1074" cy="834" r="32"/>
        <path d="M733 507l28 26m0-26l-28 26M1056 503l28 26m0-26l-28 26M736 831l28 26m0-26l-28 26M1060 826l28 26m0-26l-28 26" stroke-width="6"/></g>
      <g fill="#6f6c68" stroke="#111" stroke-width="5"><path d="M846 607c40-32 88-32 128-2l-14 13c-33-20-65-20-98 2zM818 655l24-5c-2 45 12 75 48 90v24c-55-10-78-62-72-109zM1002 652l-22-2c2 45-15 75-48 90v24c53-10 75-62 70-112zM892 622h37l2 26c14 7 22 18 24 32l11 9-14 29-14-7c-18 7-38 7-56 0l-12 7-16-29 13-10c3-14 11-25 24-31z"/></g>
      <path d="M465 620l230-2m12 0h22m18-1l180-2" stroke="#e8624a" stroke-width="4" fill="none"/>
      <path d="M940 455l95 157 325-4" stroke="#a48fd0" stroke-width="5" fill="none"/><circle cx="1035" cy="612" r="17" fill="#9480b4" stroke="#6f5a90" stroke-width="6"/><circle cx="1035" cy="612" r="6" fill="#51317c"/>
      <path d="M1355 608l225-2 1000-10" stroke="#8a71bb" stroke-width="6"/>
      <circle cx="1007" cy="266" r="27" fill="#a482e2"/><circle cx="1007" cy="266" r="15" fill="#f1ecff"/>
    </g>
    <path d="M1527 209L1299 614" stroke="#755ea3" stroke-width="1.700"/>
    <circle cx="1299" cy="614" r="7" fill="#3a2a58"/><circle cx="1299" cy="614" r="4" fill="none" stroke="#8a72b8" stroke-width="1.500"/>
    <g transform="translate(1660 200) scale(.33333)">
      <rect x="152" y="367" width="660" height="650" rx="52" fill="none" stroke="#aa7f58" stroke-width="5" transform="rotate(-.5 478 690)"/>
      <circle cx="478" cy="692" r="130" fill="#8f6b8d"/><circle cx="478" cy="684" r="128" fill="#a95f35"/><circle cx="478" cy="687" r="125" fill="#e0f1fa"/><path d="M354 727h248M372 622h212M478 566v244M374 622v130M583 622v130" stroke="#bccccf" stroke-width="3"/>
      <circle cx="478" cy="687" r="127" fill="none" stroke="#7d5a9a" stroke-width="3"/>
      <circle cx="478" cy="685" r="21" fill="#fff" stroke="#a586df" stroke-width="9"/>
      <g fill="#b5763a" stroke="#ab87e0" stroke-width="14"><circle cx="315" cy="526" r="18"/><circle cx="638" cy="523" r="18"/><circle cx="318" cy="851" r="18"/><circle cx="641" cy="848" r="18"/></g>
      <g fill="#fff"><circle cx="315" cy="529" r="9"/><circle cx="638" cy="526" r="9"/><circle cx="318" cy="854" r="9"/><circle cx="641" cy="851" r="9"/></g>
      <circle cx="475" cy="369" r="38" fill="#f6f2ff" stroke="#7f5ed0" stroke-width="5"/><circle cx="475" cy="369" r="20" fill="none" stroke="#a586df" stroke-width="9"/><path d="M435 369h80" stroke="#bd7a3b" stroke-width="4"/>
      <path d="M513 140h154v154H513z" fill="#bfc2bd" stroke="#777" stroke-width="3" stroke-dasharray="28 8"/><path d="M540 168h98v98H540z" fill="#b7c0bf"/>
      <text x="556" y="232" font-family="Open Sans" font-size="38" font-weight="700" fill="#747b7b">TOP</text>
      <text x="681" y="302" font-family="Open Sans" font-size="42" font-weight="700" fill="#e05566">X</text><path d="M668 288h10" stroke="#d55" stroke-width="5"/>
      <text x="490" y="319" font-family="Open Sans" font-size="44" font-weight="700" fill="#4a4fc4">Z</text><ellipse cx="524" cy="120" rx="9" ry="19" fill="#76bf6c"/>
    </g>
  </svg>

  <aside class="side position-relative d-flex flex-column">
    <div class="side-head d-flex align-items-center"><button class="fold" aria-label="Collapse"><svg width="16" height="10"><use href="#rewind"/></svg></button><span>BROWSER</span><button aria-label="Hide"><svg width="18" height="18"><circle cx="9" cy="9" r="7" fill="#2e2e2e"/><path d="M5 9h8" stroke="#eee" stroke-width="1.500"/></svg></button></div>
    <div class="d-flex mt-2">
      <div class="track"><div class="thumb"></div></div>
      <div class="tree d-flex flex-column" id="tree"></div>
    </div>
    <div class="side-head closed d-flex align-items-center mt-auto"><span>COMMENTS</span><button aria-label="Show comments"><svg width="18" height="18"><circle cx="9" cy="9" r="7" fill="#2e2e2e"/><path d="M5 9h8M9 5v8" stroke="#eee" stroke-width="1.700"/></svg></button></div>
  </aside>

  <div class="navtools position-absolute d-flex align-items-center">
    <button class="d-flex align-items-center gap-2" aria-label="Orbit"><svg width="23" height="24"><path d="M8 23V7H5l6-7 6 7h-3v16z" fill="url(#gMetal)" stroke="#555"/><path d="M7 10C-3 13-1 18 9 18M15 10c11 3 8 9-2 8" fill="none" stroke="#333" stroke-width="1.600"/><path d="M5 14l-4 4 5 3z" fill="#222"/></svg><svg width="9" height="8"><use href="#tri"/></svg></button>
    <button aria-label="Look at"><svg width="23" height="24"><path d="M1 8h21v14H1z" fill="#d5d9df" stroke="#666"/><path d="M4 12h14v7H4z" fill="#9ba9bd" stroke="#555"/><path d="M2 8l9-6v3h8l-5 3" fill="#f5f5f5" stroke="#666"/></svg></button>
    <button class="apart" aria-label="Pan"><svg width="24" height="24"><path d="M8 23c-1-5-6-8-7-12 1-2 3-1 5 3L4 4c0-2 2-2 3 0l2 7-1-9c0-2 3-2 3 0l1 9 1-8c0-2 3-2 3 0l-1 9 3-6c1-2 3-1 3 1-1 4-3 7-3 10l-2 6z" fill="#fff" stroke="#444" stroke-width="1.200"/></svg></button>
    <button class="apart" aria-label="Zoom"><svg width="25" height="24"><path d="M15 13l8 9" stroke="#222" stroke-width="4"/><circle cx="9" cy="9" r="8" fill="url(#gLens)" stroke="#777" stroke-width="1.500"/><path d="M19 4h6M22 1v6M19 9h6" stroke="#444"/></svg></button>
    <button class="apart d-flex align-items-center gap-2" aria-label="Fit"><svg width="24" height="24"><path d="M1 1h22v22H1z" fill="none" stroke="#666" stroke-dasharray="4 3"/><path d="M15 14l7 8" stroke="#222" stroke-width="4"/><circle cx="10" cy="9" r="8" fill="url(#gLens)" stroke="#777" stroke-width="1.500"/></svg><svg width="9" height="8"><use href="#tri"/></svg></button>
    <button class="d-flex align-items-center gap-1" aria-label="Display settings"><svg width="24" height="24"><path d="M1 1h22v17H1z" fill="#dfe3ea" stroke="#555"/><path d="M3 3h18v12H3z" fill="#86a9d6"/><path d="M9 18h6v3h4v2H5v-2h4z" fill="#aaa" stroke="#666"/></svg><svg width="9" height="8"><use href="#tri"/></svg></button>
    <button class="d-flex align-items-center gap-1" aria-label="Grid settings"><svg width="24" height="24"><path d="M1 1h22v22H1z" fill="#f8f8f8" stroke="#444"/><path d="M1 5h22M1 9h22M1 13h22M1 17h22M1 20h22M4 1v22M8 1v22M12 1v22M16 1v22M20 1v22" stroke="#666"/></svg><svg width="9" height="8"><use href="#tri"/></svg></button>
    <button class="d-flex align-items-center gap-1" aria-label="Viewports"><svg width="23" height="21"><path d="M1 1h21v19H1z" fill="#8eacd5" stroke="#4a5e80" stroke-width="1.500"/><path d="M11.500 1v19M1 10.500h21" stroke="#4a5e80" stroke-width="2"/></svg><svg width="9" height="8"><use href="#tri"/></svg></button>
  </div>

  <button class="quick-setup position-absolute d-flex flex-column align-items-center justify-content-between"><svg width="16" height="11"><use href="#rewind"/></svg><span>QUICK SETUP</span></button>
</main>

<footer class="timeline d-flex flex-shrink-0">
  <div class="playback d-flex align-items-center">
    <button aria-label="To start"><svg width="24" height="24" fill="currentColor"><path d="M0 3h2.500v18H0zM17 3v18L3 12z"/></svg></button>
    <button aria-label="Step back"><svg width="24" height="24" fill="currentColor"><path d="M15 3v18L0 12zM16 9h3v8h-3z"/></svg></button>
    <button aria-label="Play"><svg width="24" height="24" fill="currentColor"><path d="M0 1l18 11L0 23z"/></svg></button>
    <button aria-label="Step forward"><svg width="24" height="24" fill="currentColor"><path d="M4 3l15 9-15 9zM0 9h3v8H0z"/></svg></button>
    <button aria-label="To end"><svg width="24" height="24" fill="currentColor"><path d="M0 3l14 9-14 9zM14 3h3v18h-3z"/></svg></button>
  </div>
  <div class="steps position-relative flex-fill d-flex">
    <div class="hbar position-absolute"></div>
    <div class="d-flex" id="steps"></div>
    <svg width="18" height="48" class="marker flex-shrink-0"><path d="M0 0h18v6l-6 7H6L0 6z" fill="#606060"/><path d="M9 5v43" stroke="#606060" stroke-width="2.500"/></svg>
    <button class="settings ms-auto me-3 pe-1 pt-2" aria-label="Timeline settings"><svg width="24" height="24"><use href="#gear"/></svg></button>
  </div>
</footer>

<script>
  const icon = (id, w, h = w) => `<svg width="${w}" height="${h}"><use href="#${id}"/></svg>`;

  // Ribbon groups: label, then the tools of the group
  const groups = [
    ['CREATE', 'newsketch extrude revolve hole patternrect formbox'],
    ['MODIFY', 'presspull fillet shell combine split'],
    ['ASSEMBLE', 'newcomp joint bom'],
    ['CONFIGURE', 'cfg1 cfg2'],
    ['CONSTRUCT', 'plane'],
    ['INSPECT', 'measure'],
    ['INSERT', 'derive bolt picture'],
    ['SELECT', 'selecttool']
  ];
  document.getElementById('tools').innerHTML = groups.map(([name, tools]) => `
    <div class="tool-group"><div class="tool-row">${tools.split(' ').map(t =>
      `<button class="${t === 'selecttool' ? 'picked' : ''}" aria-label="${t}">${icon(t, 48, 49)}</button>`).join('')}</div>
    <button class="tool-menu">${name}${icon('tri', 9, 8)}</button></div>`).join('');

  // Browser tree: level, arrow, eye, icon, name, hatched
  const nodes = [
    [1, 'closed', '', 'gear', 'Document Settings'], [1, 'closed', '', 'folder', 'Named Views'],
    [1, 'closed', 'eye', 'folder', 'Origin'], [1, 'open', 'eye', 'folder', 'Bodies', 1],
    [2, '', 'eye', 'body', 'Body1'], [2, '', 'eyeoff', 'body', 'Body2'],
    [2, '', 'eyeoff', 'meshy', 'Component3'], [2, '', 'eyeoff', 'meshy', 'Body36'],
    [2, '', 'eye', 'body', 'Body15'], [2, '', 'eye', 'body', 'Body21', 1],
    [1, 'open', 'eye', 'folder', 'Sketches'],
    [2, '', 'eyeoff', 'sketchlock', 'Sketch1'], [2, '', 'eyeoff', 'sketch', 'Sketch2'],
    [2, '', 'eyeoff', 'sketch', 'Sketch3'], [2, '', 'eye', 'sketchlock', 'Sketch4'],
    [2, 'closed', 'eye', 'sketchlock', 'Sketch5'], [2, '', 'eyeoff', 'sketch', 'Sketch6'],
    [2, '', 'eye', 'sketchlock', 'Sketch7'], [2, '', 'eye', 'sketchlock', 'Sketch8']
  ];
  const arrow = a => a ? icon(a, 10, a === 'open' ? 10 : 14) : '<svg width="10" height="10"></svg>';
  document.getElementById('tree').innerHTML = `
    <div class="node">${arrow('open')}<div class="chip root"><button aria-label="Toggle">${icon('eye', 24, 16)}</button>
      <label class="root-name" for="act">${icon('component', 24)}<span>Onigiri (v1~recovered)</span></label>
      <input type="radio" class="radio-dot" id="act" checked></div></div>` +
    nodes.map(([lv, a, eye, ic, name, hatch]) => `
    <div class="node lv${lv}">${arrow(a)}<div class="chip ${hatch ? 'hatched' : ''} ${ic === 'gear' ? 'plain' : ''}">
      ${eye ? `<button aria-label="Toggle ${name}">${icon(eye, 24, 16)}</button>` : ''}
      ${icon(ic, ic === 'gear' ? 20 : 24)}<label>${name}</label></div></div>`).join('');

  // Timeline features in order; m = move, s = sketch, e = extrude, h = hole ...
  const kinds = { m: 'move', s: 'sketch', e: 'extrude', h: 'hole', f: 'form', b: 'emboss', c: 'copybody', t: 'toblue', g: 'togray', a: 'align' };
  document.getElementById('steps').innerHTML = [...'mmmmmsmfsbseehhhcmsssstgsmssseseeeeseaammmmee'].map((k, i) => `
    <button class="step ${i === 27 ? 'lit' : ''}" aria-label="${kinds[k]}">${i === 33 || i === 42 ?
      '<svg class="flag" width="24" height="9"><path d="M1 8l5-7M9 8l5-7M17 8l5-7" stroke="#444" stroke-width="3"/></svg>' : ''}
      <span class="frame">${icon(kinds[k], 24)}</span></button>`).join('');

  // Ground grid, slightly skewed by the camera; five minor cells to a major one
  let g = '';
  for (let i = -36; i <= 24; i++) {
    if (i === 0) continue;
    const x = 1196 + i * 34.83, c = i % 5 ? '#ececec' : '#c6c6c6';
    g += `<path d="M${x - 6.2} 209L${x + 2.8} 1053" stroke="${c}" stroke-width="1.2"/>`;
  }
  for (let j = -18; j <= 9; j++) {
    if (j === 0) continue;
    const y = 809 + j * 34.8, c = j % 5 ? '#ececec' : '#c6c6c6';
    g += `<path d="M0 ${y}L1920 ${y - 19.2}" stroke="${c}" stroke-width="1.2"/>`;
  }
  document.getElementById('grid').innerHTML = g;
</script>
</body>
</html>
